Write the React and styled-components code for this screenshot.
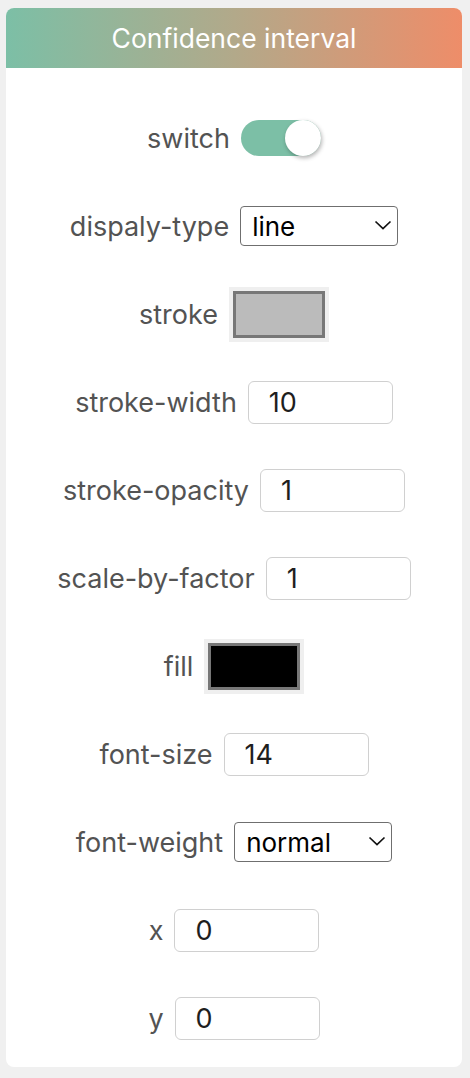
import styled, { createGlobalStyle } from "styled-components";
import { useState } from "react";

const GlobalStyle = createGlobalStyle`
  html, body {
    margin: 0;
    padding: 0;
    background: #f0f0f0;
    font-family: Inter, "Noto Sans", "Liberation Sans", sans-serif;
  }
`;

const Page = styled.div`
  padding: 8px 8px 11px 6px;
`;

const Card = styled.div`
  background: #fff;
  border-radius: 8px;
  overflow: hidden;
  width: 456px;
`;

const Header = styled.div`
  height: 60px;
  display: flex;
  align-items: center;
  justify-content: center;
  background: linear-gradient(to right, #7cbfa6, #b2a98a 50%, #ee8d69);
  color: #fff;
  font-size: 26.5px;
`;

const Body = styled.div`
  display: flex;
  flex-direction: column;
  gap: 44px;
  padding: 48px 0 27px;
`;

const Row = styled.div`
  height: 44px;
  display: flex;
  align-items: center;
  justify-content: center;
  gap: 11px;
`;

const Label = styled.label`
  font-size: 27px;
  color: #535353;
`;

const TextInput = styled.input`
  box-sizing: border-box;
  width: 145px;
  height: 43px;
  border: 1.5px solid #d0d0d0;
  border-radius: 6px;
  padding: 0 0 0 20px;
  font-family: inherit;
  font-size: 27px;
  color: #1e1e1e;
  outline: none;
`;

const SelectWrap = styled.div`
  position: relative;
  width: 158px;
  height: 40px;
`;

const Select = styled.select`
  appearance: none;
  box-sizing: border-box;
  width: 100%;
  height: 100%;
  border: 1.5px solid #6f6f6f;
  border-radius: 4px;
  background: #fff;
  padding: 0 0 0 11px;
  font-family: inherit;
  font-size: 26px;
  color: #000;
`;

const Chevron = styled.svg`
  position: absolute;
  right: 6px;
  top: 14px;
  pointer-events: none;
`;

const ColorSwatch = styled.div`
  box-sizing: border-box;
  width: 100px;
  height: 55px;
  padding: 4px;
  background: #efefef;
  div {
    box-sizing: border-box;
    width: 100%;
    height: 100%;
    border: 3px solid #777;
    background: ${(p) => p.color};
  }
`;

const Track = styled.button`
  position: relative;
  width: 80px;
  height: 36px;
  border: none;
  border-radius: 18px;
  background: ${(p) => (p.on ? "#7cbfa6" : "#ccc")};
  padding: 0;
  cursor: pointer;
`;

const Knob = styled.span`
  position: absolute;
  top: 0;
  left: ${(p) => (p.on ? "44px" : "0")};
  width: 36px;
  height: 36px;
  border-radius: 50%;
  background: #fff;
  box-shadow: 1px 2px 4px rgba(0, 0, 0, 0.3);
`;

const Dropdown = ({ value, options }) => (
  <SelectWrap>
    <Select defaultValue={value}>
      {options.map((o) => (
        <option key={o}>{o}</option>
      ))}
    </Select>
    <Chevron width="18" height="10" viewBox="0 0 18 10">
      <path d="M1.5 1.5 L9 8.5 L16.5 1.5" fill="none" stroke="#111" strokeWidth="1.7" />
    </Chevron>
  </SelectWrap>
);

const App = () => {
  const [on, setOn] = useState(true);
  return (
    <>
      <GlobalStyle />
      <Page>
        <Card>
          <Header>Confidence interval</Header>
          <Body>
            <Row>
              <Label>switch</Label>
              <Track on={on} onClick={() => setOn(!on)}>
                <Knob on={on} />
              </Track>
            </Row>
            <Row>
              <Label>dispaly-type</Label>
              <Dropdown value="line" options={["line", "area"]} />
            </Row>
            <Row>
              <Label>stroke</Label>
              <ColorSwatch color="#bbbbbb"><div /></ColorSwatch>
            </Row>
            <Row>
              <Label>stroke-width</Label>
              <TextInput defaultValue="10" />
            </Row>
            <Row>
              <Label>stroke-opacity</Label>
              <TextInput defaultValue="1" />
            </Row>
            <Row>
              <Label>scale-by-factor</Label>
              <TextInput defaultValue="1" />
            </Row>
            <Row>
              <Label>fill</Label>
              <ColorSwatch color="#000"><div /></ColorSwatch>
            </Row>
            <Row>
              <Label>font-size</Label>
              <TextInput defaultValue="14" />
            </Row>
            <Row>
              <Label>font-weight</Label>
              <Dropdown value="normal" options={["normal", "bold"]} />
            </Row>
            <Row>
              <Label>x</Label>
              <TextInput defaultValue="0" />
            </Row>
            <Row>
              <Label>y</Label>
              <TextInput defaultValue="0" />
            </Row>
          </Body>
        </Card>
      </Page>
    </>
  );
};

export default App;
